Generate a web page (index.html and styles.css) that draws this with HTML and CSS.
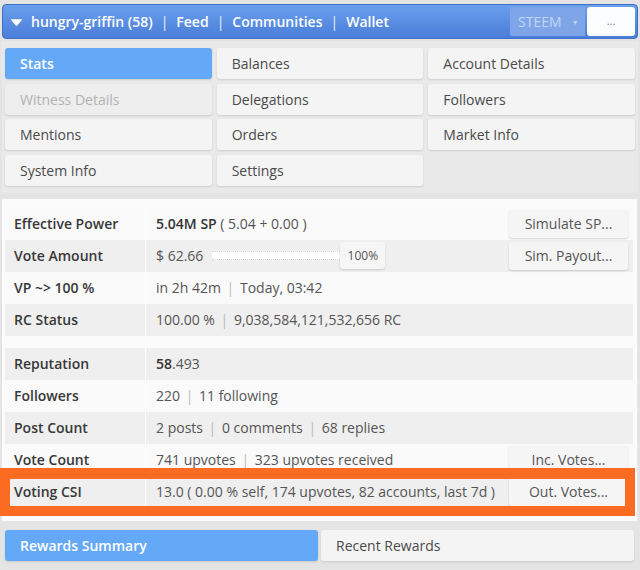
FILE: index.html
```html
<!DOCTYPE html>
<html>
<head>
<meta charset="utf-8">
<link rel="stylesheet" href="styles.css">
</head>
<body>
<div class="page">
  <div class="topbar">
    <svg class="tri" width="13" height="9" viewBox="0 0 13 9"><path d="M1.5 1.2 L11.5 1.2 Q12.6 1.2 11.9 2.1 L7.2 7.6 Q6.5 8.4 5.8 7.6 L1.1 2.1 Q0.4 1.2 1.5 1.2 Z" fill="#fff"/></svg>
    <span class="nav-link">hungry-griffin (58)</span>
    <span class="sep">|</span>
    <span class="nav-link">Feed</span>
    <span class="sep">|</span>
    <span class="nav-link">Communities</span>
    <span class="sep">|</span>
    <span class="nav-link">Wallet</span>
    <div class="spacer"></div>
    <div class="coin">STEEM <span class="caret">▾</span></div>
    <div class="more">...</div>
  </div>

  <div class="tabs">
    <div class="tab active">Stats</div>
    <div class="tab">Balances</div>
    <div class="tab">Account Details</div>
    <div class="tab disabled">Witness Details</div>
    <div class="tab">Delegations</div>
    <div class="tab">Followers</div>
    <div class="tab">Mentions</div>
    <div class="tab">Orders</div>
    <div class="tab">Market Info</div>
    <div class="tab">System Info</div>
    <div class="tab">Settings</div>
    <div class="tab empty"></div>
  </div>

  <div class="stats">
    <div class="row light">
      <div class="label">Effective Power</div>
      <div class="value"><b>5.04M SP</b> ( 5.04 + 0.00 )</div>
      <div class="action"><div class="btn">Simulate SP...</div></div>
    </div>
    <div class="row dark">
      <div class="label">Vote Amount</div>
      <div class="value vote">$ 62.66 <span class="track"></span><span class="pct">100%</span></div>
      <div class="action"><div class="btn">Sim. Payout...</div></div>
    </div>
    <div class="row light">
      <div class="label">VP ~&gt; 100 %</div>
      <div class="value">in 2h 42m <span class="bar">|</span> Today, 03:42</div>
      <div class="action"></div>
    </div>
    <div class="row dark">
      <div class="label">RC Status</div>
      <div class="value">100.00 % <span class="bar">|</span> 9,038,584,121,532,656 RC</div>
      <div class="action"></div>
    </div>
    <div class="gap"></div>
    <div class="row dark">
      <div class="label">Reputation</div>
      <div class="value"><b>58</b>.493</div>
      <div class="action"></div>
    </div>
    <div class="row light">
      <div class="label">Followers</div>
      <div class="value">220 <span class="bar">|</span> 11 following</div>
      <div class="action"></div>
    </div>
    <div class="row dark">
      <div class="label">Post Count</div>
      <div class="value">2 posts <span class="bar">|</span> 0 comments <span class="bar">|</span> 68 replies</div>
      <div class="action"></div>
    </div>
    <div class="row light">
      <div class="label">Vote Count</div>
      <div class="value">741 upvotes <span class="bar">|</span> 323 upvotes received</div>
      <div class="action"><div class="btn">Inc. Votes...</div></div>
    </div>
    <div class="row dark">
      <div class="label">Voting CSI</div>
      <div class="value">13.0 ( 0.00 % self, 174 upvotes, 82 accounts, last 7d )</div>
      <div class="action"><div class="btn">Out. Votes...</div></div>
    </div>
    <div class="highlight"></div>
  </div>

  <div class="rewards">
    <div class="tab active">Rewards Summary</div>
    <div class="tab">Recent Rewards</div>
  </div>
</div>
</body>
</html>
```

FILE: styles.css
```css
* { box-sizing: border-box; }
html, body { margin: 0; padding: 0; }
body {
  background: #e4e4e4;
  font-family: "Open Sans", "Noto Sans", sans-serif;
  font-size: 14px;
  color: #444;
  width: 640px;
  height: 570px;
  overflow: hidden;
}
.page { padding: 4px 2px 0 2px; }

.topbar {
  height: 35px;
  border-radius: 4px;
  background: linear-gradient(#6a9fec, #4a7ed9);
  border: 1px solid #3f6fc6;
  display: flex;
  align-items: center;
  padding-left: 7px;
  padding-right: 2px;
  color: #fff;
}
.tri { margin-right: 8px; margin-top: 1px; }
.nav-link { font-size: 14px; font-weight: 600; color: #fff; }
.sep { font-size: 14px; margin: 0 8px; color: #e8f0ff; }
.spacer { flex: 1; }
.coin {
  width: 75px;
  height: 29px;
  background: #7ea5e8;
  color: #c3d5f4;
  font-size: 14px;
  display: flex;
  align-items: center;
  padding-left: 8px;
  border-radius: 2px 0 0 2px;
}
.caret { font-size: 8px; margin-left: 11px; }
.more {
  width: 48px;
  height: 29px;
  margin-left: 2px;
  background: #fcfdff;
  color: #777;
  border-radius: 3px;
  display: flex;
  align-items: center;
  justify-content: center;
  font-size: 11px;
  padding-bottom: 3px;
}

.tabs {
  margin-top: 2px;
  background: #e9e9e9;
  padding: 7px 3px 7px 3px;
  display: grid;
  grid-template-columns: 1fr 1fr 1fr;
  grid-auto-rows: 31px;
  gap: 4.6px 5px;
}
.tab {
  background: #f4f4f4;
  border-radius: 3px;
  box-shadow: 0 1px 2px rgba(0,0,0,0.12);
  display: flex;
  align-items: center;
  padding-left: 15px;
  font-size: 14px;
  color: #4a4a4a;
}
.tab.active { background: #64a9f8; color: #fff; font-weight: 600; }
.tab.disabled { background: #eeeeee; color: #b2b2b2; }
.tab.empty { background: transparent; box-shadow: none; }

.stats {
  position: relative;
  margin-top: 5px;
  background: #fbfbfb;
  border-top: 1px solid #e6e6e6;
  border-right: 1px solid #e6e6e6;
  padding: 9px 4px 13px 3px;
}
.row {
  display: grid;
  grid-template-columns: 141px 1fr 124px;
  height: 32px;
}
.row.dark { background: #efefef; }
.row.light { background: #fafafa; }
.label {
  border-right: 1px solid #ffffff;
  display: flex;
  align-items: center;
  padding-left: 9px;
  font-weight: 600;
  color: #383838;
}
.value {
  display: flex;
  align-items: center;
  padding-left: 10px;
  color: #555;
  white-space: pre;
}
.value b { font-weight: 600; color: #333; }
.bar { color: #bbb; margin: 0 2px; }
.vote { white-space: normal; }
.track {
  width: 128px;
  height: 9px;
  margin-left: 9px;
  background: #fff;
  border-top: 1px dotted #d6d6d6;
  border-bottom: 1px dotted #d6d6d6;
}
.pct {
  width: 45px;
  height: 27px;
  background: #f6f6f6;
  box-shadow: 0 1px 2px rgba(0,0,0,0.15);
  border-radius: 3px;
  font-size: 12px;
  display: flex;
  align-items: center;
  justify-content: center;
  color: #555;
}
.action {
  display: flex;
  align-items: center;
  padding-right: 5px;
}
.btn {
  width: 119px;
  height: 28px;
  background: #f5f5f5;
  border-radius: 3px;
  box-shadow: 0 1px 2px rgba(0,0,0,0.15);
  display: flex;
  align-items: center;
  justify-content: center;
  color: #555;
}
.gap { height: 12px; }

.highlight {
  position: absolute;
  left: -2px;
  top: 269px;
  width: 635px;
  height: 48px;
  border: 10px solid #fb6b22;
  border-top-width: 11px;
}

.rewards {
  margin-top: 9px;
  display: grid;
  grid-template-columns: 313px 313px;
  gap: 3px;
  padding-left: 3px;
}
.rewards .tab { height: 31px; }
```
